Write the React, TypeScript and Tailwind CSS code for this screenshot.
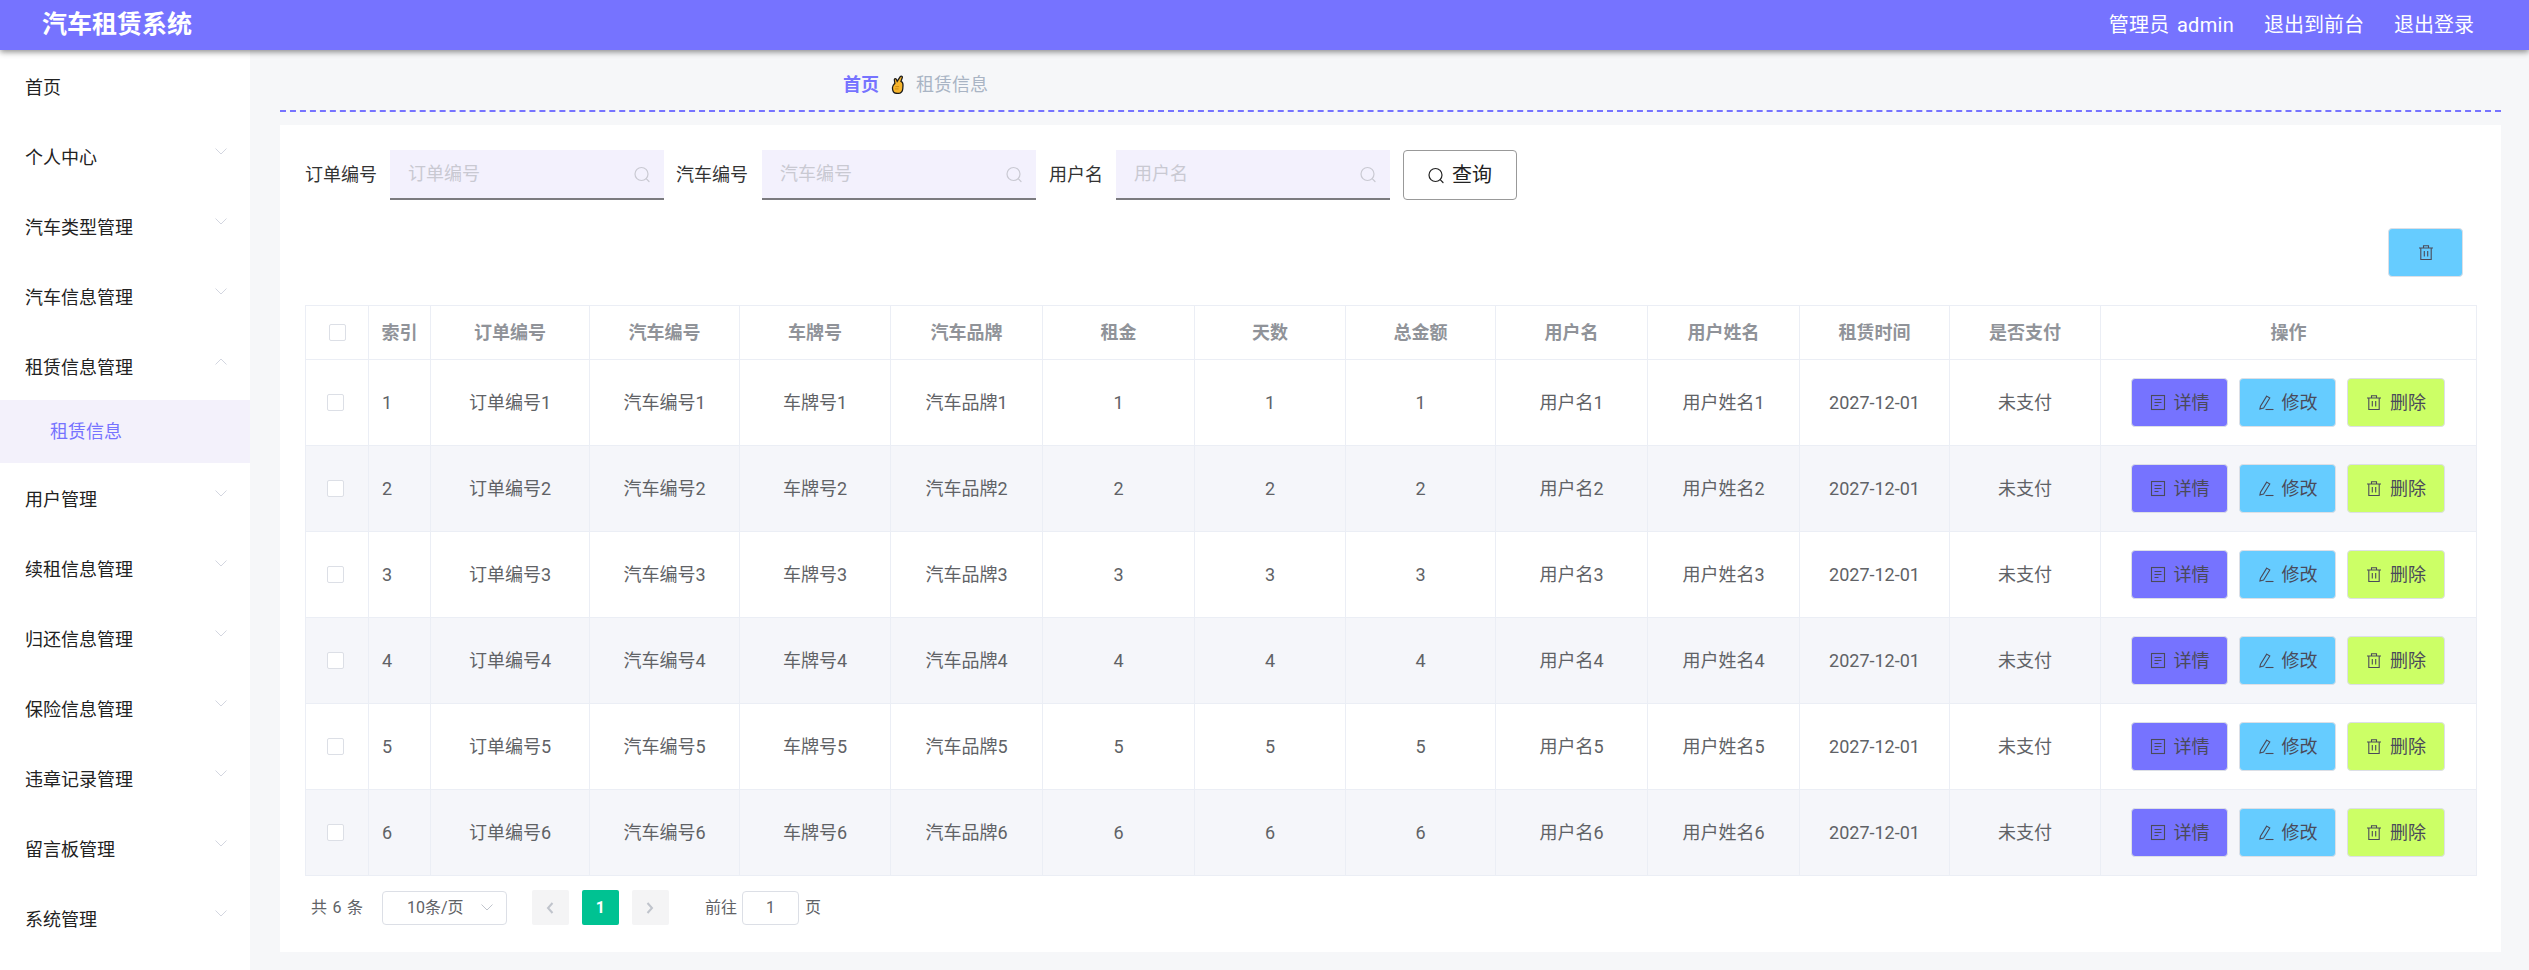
import React from "react";

const FONT = { fontFamily: 'Roboto, "Noto Sans CJK SC", sans-serif' };

const SearchIcon = ({ className = "" }: { className?: string }) => (
  <svg viewBox="0 0 16 16" className={className} fill="none" stroke="currentColor" strokeWidth="1.2">
    <circle cx="7.5" cy="7.5" r="6.5" />
    <path d="M12.200 12.200 15 15" strokeLinecap="round" />
  </svg>
);
const Chevron = ({ up = false }: { up?: boolean }) => (
  <svg viewBox="0 0 12 7" className="w-[12px] h-[7px] text-[#d3d6e0]" fill="none" stroke="currentColor" strokeWidth="1">
    <path d={up ? "M.5 6.5 6 1l5.5 5.5" : "M.5.5 6 6l5.5-5.5"} />
  </svg>
);
const DocIcon = () => (
  <svg viewBox="0 0 16 16" className="w-[16px] h-[17px]" fill="none" stroke="currentColor" strokeWidth="1.1">
    <rect x="1.5" y="1" width="13" height="14" />
    <path d="M4.5 5h7M4.5 8h7M4.5 11h4" />
  </svg>
);
const EditIcon = () => (
  <svg viewBox="0 0 16 16" className="w-[16px] h-[17px]" fill="none" stroke="currentColor" strokeWidth="1.1">
    <path d="M8.7 1.6 11.8 3.5 5.6 13.6 1.9 14.6 2.5 11.6Z" />
    <path d="M7.5 15h8" />
  </svg>
);
const TrashIcon = () => (
  <svg viewBox="0 0 16 16" className="w-[16px] h-[17px]" fill="none" stroke="currentColor" strokeWidth="1.1">
    <path d="M1 3.5h14M5.5 3.5V1.2h5v2.3M2.8 3.5V15h10.4V3.5M6.3 6.5v5.5M9.7 6.5v5.5" />
  </svg>
);
const HandIcon = () => (
  <svg viewBox="0 0 12 18" className="w-[13px] h-[19px]">
    <path
      d="M1.2 12C1.2 10 2.500 9 3.500 8L3 4.500C3 3 4.800 3 5 4.300L5.700 6 8.600 1.600C9.400.6 11 1.200 10.500 2.600L9.300 6C11 6.500 11.300 8 11.200 10L11 13C10.800 16 8.800 17.500 6 17.500 3 17.500 1.200 15.500 1.200 12Z"
      fill="#f7b52c"
      stroke="#1b1b1b"
      strokeWidth="1.200"
    />
    <path d="M4 11h3.500M3.500 13.200h3.500" stroke="#c98a12" strokeWidth="0.900" fill="none" />
  </svg>
);

const menu: { name: string; arrow?: boolean; up?: boolean; sub?: string }[] = [
  { name: "首页" },
  { name: "个人中心", arrow: true },
  { name: "汽车类型管理", arrow: true },
  { name: "汽车信息管理", arrow: true },
  { name: "租赁信息管理", arrow: true, up: true, sub: "租赁信息" },
  { name: "用户管理", arrow: true },
  { name: "续租信息管理", arrow: true },
  { name: "归还信息管理", arrow: true },
  { name: "保险信息管理", arrow: true },
  { name: "违章记录管理", arrow: true },
  { name: "留言板管理", arrow: true },
  { name: "系统管理", arrow: true },
];

const widths = [63, 62, 159, 150, 151, 152, 152, 151, 150, 152, 152, 150, 151, 376];
const headers = ["索引", "订单编号", "汽车编号", "车牌号", "汽车品牌", "租金", "天数", "总金额", "用户名", "用户姓名", "租赁时间", "是否支付", "操作"];
const rows = [1, 2, 3, 4, 5, 6];

const Check = () => <span className="block w-[17px] h-[17px] bg-white border border-[#dcdfe6] rounded-[2px]" />;

const Field = ({ label, ml, gap }: { label: string; ml: string; gap: string }) => (
  <>
    <span className={`${ml} text-[18px] leading-[50px] text-[#333] whitespace-nowrap`}>{label}</span>
    <div className={`${gap} w-[274px] h-[50px] bg-[#f3f1fd] border-b-2 border-[#7b7b7f] flex items-center justify-between pl-[18px] pr-[14px] text-[#c9c9d2]`}>
      <span className="text-[18px] leading-[48px]">{label}</span>
      <SearchIcon className="w-[16px] h-[17px]" />
    </div>
  </>
);

const ActionBtn = ({ bg, icon, text, w }: { bg: string; icon: React.ReactNode; text: string; w: string }) => (
  <button className={`${bg} ${w} h-[49px] border border-[#dcdfe6] rounded-[4px] flex items-center justify-center gap-[8px] text-[#4a4a5a] text-[18px]`}>
    {icon}
    <span>{text}</span>
  </button>
);

export default function App() {
  return (
    <div className="w-[2529px] h-[970px] overflow-hidden flex flex-col bg-[#f6f7f9]" style={FONT}>
      <header className="relative z-10 h-[50px] shrink-0 bg-[#7673ff] shadow-[0_2px_6px_rgba(0,0,0,0.45)] flex items-center justify-between pl-[42px] pr-[55px] text-white">
        <span className="text-[25px] font-bold leading-[50px]">汽车租赁系统</span>
        <div className="flex items-center text-[20px] leading-[50px]">
          <span className="[word-spacing:2px] tracking-[0.3px]">管理员 admin</span>
          <span className="ml-[30px]">退出到前台</span>
          <span className="ml-[30px]">退出登录</span>
        </div>
      </header>
      <div className="flex flex-1 min-h-0">
        <aside className="w-[250px] shrink-0 bg-white pt-[2px]">
          {menu.map((m) => (
            <div key={m.name}>
              <div className="h-[70px] flex items-center justify-between pl-[25px] pr-[23px] text-[18px] text-[#222]">
                <span>{m.name}</span>
                {m.arrow && (
                  <span className="mb-[12px]">
                    <Chevron up={m.up} />
                  </span>
                )}
              </div>
              {m.sub && (
                <div className="h-[63px] -mt-[2px] mb-[1px] bg-[#f3f1fb] pl-[50px] flex items-center text-[18px] text-[#7673ff]">{m.sub}</div>
              )}
            </div>
          ))}
        </aside>
        <main className="flex-1 min-w-0 pl-[30px] pr-[28px]">
          <div className="h-[62px] border-b-2 border-dashed border-[#7673ff] flex items-center pt-[8px] pl-[563px] text-[18px]">
            <span className="font-bold text-[#7673ff]">首页</span>
            <span className="mx-[12px] flex">
              <HandIcon />
            </span>
            <span className="text-[#a9b4c4]">租赁信息</span>
          </div>
          <section className="mt-[13px] h-[827px] bg-white pt-[25px] pl-[25px] pr-[25px]">
            <div className="flex items-center">
              <Field label="订单编号" ml="" gap="ml-[13px]" />
              <Field label="汽车编号" ml="ml-[12px]" gap="ml-[14px]" />
              <Field label="用户名" ml="ml-[13px]" gap="ml-[13px]" />
              <button className="ml-[13px] w-[114px] h-[50px] border border-[#999] rounded-[4px] bg-white flex items-center justify-center gap-[8px] text-[20px] text-[#222]">
                <SearchIcon className="w-[16px] h-[17px]" />
                <span>查询</span>
              </button>
            </div>
            <div className="flex justify-end mt-[28px] pr-[13px]">
              <button className="w-[75px] h-[49px] bg-[#66ccff] border border-[#dcdfe6] rounded-[4px] flex items-center justify-center text-[#4a4a5a]">
                <TrashIcon />
              </button>
            </div>
            <table className="mt-[28px] table-fixed border-collapse w-[2171px] text-[18px] text-[#606266]">
              <colgroup>
                {widths.map((w, i) => (
                  <col key={i} style={{ width: w }} />
                ))}
              </colgroup>
              <thead>
                <tr className="h-[54px]">
                  <th className="border border-[#ebeef5]">
                    <span className="flex justify-center">
                      <Check />
                    </span>
                  </th>
                  {headers.map((h) => (
                    <th key={h} className="border border-[#ebeef5] font-bold text-[#909399] text-center p-0">
                      {h}
                    </th>
                  ))}
                </tr>
              </thead>
              <tbody>
                {rows.map((n) => (
                  <tr key={n} className={`h-[86px] ${n % 2 === 0 ? "bg-[#f5f6fa]" : "bg-white"}`}>
                    <td className="border border-[#ebeef5]">
                      <span className="flex justify-center pr-[3px]">
                        <Check />
                      </span>
                    </td>
                    <td className="border border-[#ebeef5] pl-[13px]">{n}</td>
                    {[`订单编号${n}`, `汽车编号${n}`, `车牌号${n}`, `汽车品牌${n}`, n, n, n, `用户名${n}`, `用户姓名${n}`, "2027-12-01", "未支付"].map((v, i) => (
                      <td key={i} className="border border-[#ebeef5] text-center p-0 whitespace-nowrap">
                        {v}
                      </td>
                    ))}
                    <td className="border border-[#ebeef5]">
                      <div className="flex justify-center gap-[11px] pr-[1px]">
                        <ActionBtn bg="bg-[#7673ff]" w="w-[97px]" icon={<DocIcon />} text="详情" />
                        <ActionBtn bg="bg-[#66ccff]" w="w-[97px]" icon={<EditIcon />} text="修改" />
                        <ActionBtn bg="bg-[#ccff66]" w="w-[98px]" icon={<TrashIcon />} text="删除" />
                      </div>
                    </td>
                  </tr>
                ))}
              </tbody>
            </table>
            <div className="mt-[14px] flex items-center text-[16px] text-[#606266] pl-[6px] h-[35px]">
              <span className="[word-spacing:1.5px]">共 6 条</span>
              <div className="ml-[19px] w-[125px] h-[34px] border border-[#dcdfe6] rounded-[4px] flex items-center justify-between pl-[24px] pr-[13px]">
                <span>10条/页</span>
                <svg viewBox="0 0 12 7" className="w-[12px] h-[7px] text-[#c0c4cc]" fill="none" stroke="currentColor" strokeWidth="1">
                  <path d="M.5.5 6 6l5.500-5.500" />
                </svg>
              </div>
              <div className="ml-[25px] w-[37px] h-[35px] bg-[#f4f4f5] rounded-[2px] flex items-center justify-center">
                <svg viewBox="0 0 8 12" className="w-[8px] h-[12px] text-[#c0c4cc]" fill="none" stroke="currentColor" strokeWidth="2">
                  <path d="M6.500 1 2 6l4.500 5" />
                </svg>
              </div>
              <div className="ml-[13px] w-[37px] h-[35px] bg-[#00c292] rounded-[2px] flex items-center justify-center text-white font-bold">1</div>
              <div className="ml-[13px] w-[37px] h-[35px] bg-[#f4f4f5] rounded-[2px] flex items-center justify-center">
                <svg viewBox="0 0 8 12" className="w-[8px] h-[12px] text-[#c0c4cc]" fill="none" stroke="currentColor" strokeWidth="2">
                  <path d="M1.500 1 6 6l-4.500 5" />
                </svg>
              </div>
              <span className="ml-[36px]">前往</span>
              <div className="ml-[5px] w-[57px] h-[34px] border border-[#dcdfe6] rounded-[4px] flex items-center justify-center">1</div>
              <span className="ml-[6px]">页</span>
            </div>
          </section>
        </main>
      </div>
    </div>
  );
}
